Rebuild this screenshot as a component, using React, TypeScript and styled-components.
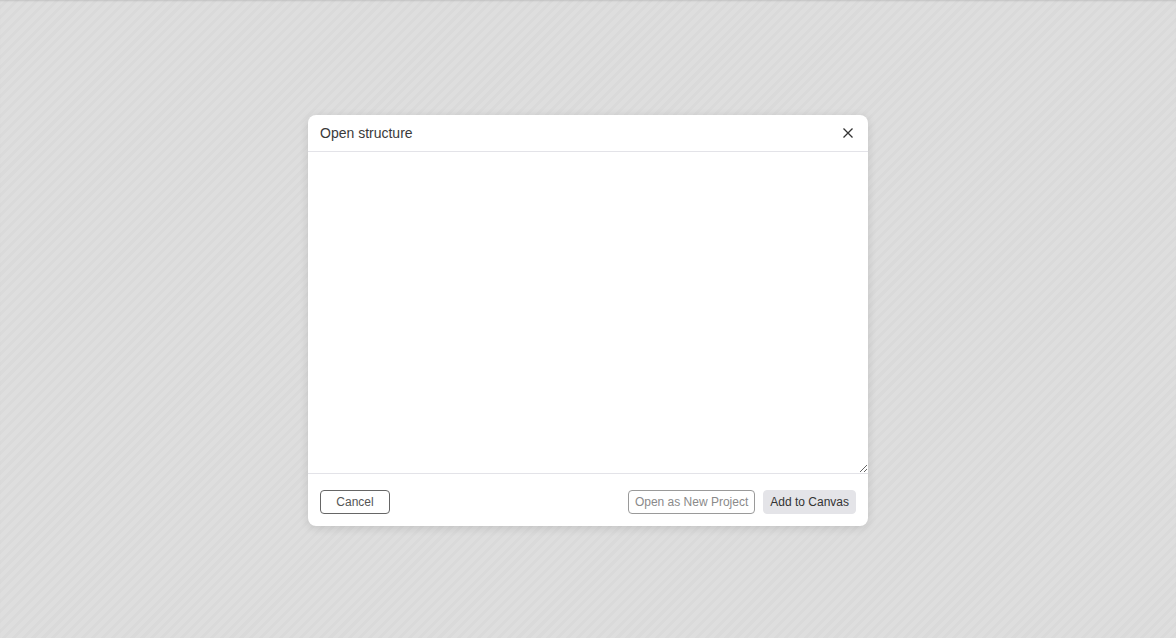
import React, { useState } from "react";
import styled, { createGlobalStyle } from "styled-components";

const GlobalStyle = createGlobalStyle`
	html, body {
		margin: 0;
		padding: 0;
		height: 100%;
	}
	body {
		font-family: "Liberation Sans", Arial, sans-serif;
	}
	#root {
		height: 100%;
	}
`;

const Backdrop = styled.div`
	width: 100%;
	height: 638px;
	display: flex;
	justify-content: center;
	align-items: flex-start;
	padding-top: 115px;
	box-sizing: border-box;
	background: repeating-linear-gradient(
		135deg,
		#dedede 0px,
		#dedede 4px,
		#dadada 4px,
		#dadada 7px
	);
	box-shadow: inset 0 2px 2px -1px rgba(0, 0, 0, 0.12);
`;

const Dialog = styled.div`
	width: 560px;
	background: #fff;
	border-radius: 8px;
	box-shadow: 0 2px 10px rgba(0, 0, 0, 0.12);
	display: flex;
	flex-direction: column;
	overflow: hidden;
`;

const Header = styled.div`
	height: 36px;
	display: flex;
	align-items: center;
	justify-content: space-between;
	padding: 0 12px;
	border-bottom: 1px solid #e3e3e8;
`;

const Title = styled.h2`
	margin: 0 0 1px;
	font-size: 14px;
	font-weight: 400;
	color: #3a3a3a;
`;

const CloseButton = styled.button`
	width: 16px;
	height: 16px;
	padding: 0;
	border: none;
	background: none;
	display: flex;
	align-items: center;
	justify-content: center;
	cursor: pointer;
	color: #333;
`;

const Editor = styled.textarea`
	display: block;
	height: 322px;
	border: none;
	border-bottom: 1px solid #e3e3e8;
	outline: none;
	resize: vertical;
	padding: 12px;
	box-sizing: border-box;
	font-family: "Liberation Mono", monospace;
	font-size: 12px;
`;

const Footer = styled.div`
	height: 52px;
	box-sizing: border-box;
	display: flex;
	align-items: flex-start;
	padding: 16px 12px 12px;
	gap: 8px;
`;

const Spacer = styled.div`
	flex: 1;
`;

const Button = styled.button<{ $variant?: "outline" | "muted" | "filled" }>`
	height: 24px;
	padding: 0 6px;
	border-radius: 4px;
	font-family: "Liberation Sans", Arial, sans-serif;
	font-size: 12px;
	cursor: pointer;
	box-sizing: border-box;
	border: 1px solid
		${(p) => (p.$variant === "filled" ? "#e4e4e8" : p.$variant === "muted" ? "#9a9a9a" : "#666")};
	background: ${(p) => (p.$variant === "filled" ? "#e4e4e8" : "#fff")};
	color: ${(p) => (p.$variant === "muted" ? "#8a8a8a" : "#333")};
`;

const CancelButton = styled(Button)`
	width: 70px;
	color: #555;
`;

export default function App() {
	const [text, setText] = useState("");

	return (
		<>
			<GlobalStyle />
			<Backdrop>
				<Dialog>
					<Header>
						<Title>Open structure</Title>
						<CloseButton aria-label="Close">
							<svg width="12" height="12" viewBox="0 0 12 12">
								<path d="M1.5 1.5 L10.5 10.5 M10.5 1.5 L1.5 10.5" stroke="currentColor" strokeWidth="1.3" />
							</svg>
						</CloseButton>
					</Header>
					<Editor value={text} onChange={(e) => setText(e.target.value)} />
					<Footer>
						<CancelButton $variant="outline">Cancel</CancelButton>
						<Spacer />
						<Button $variant="muted">Open as New Project</Button>
						<Button $variant="filled">Add to Canvas</Button>
					</Footer>
				</Dialog>
			</Backdrop>
		</>
	);
}
